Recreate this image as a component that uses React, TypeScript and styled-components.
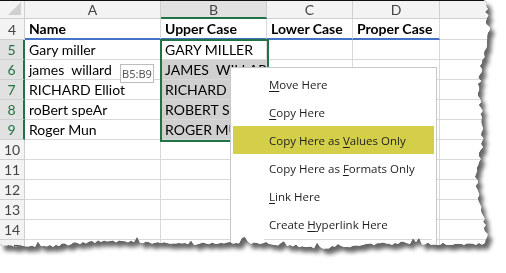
import styled, { createGlobalStyle } from "styled-components";

const GREEN = "#217346";
const GRID = "#d9d9d9";

const GlobalStyle = createGlobalStyle`
  html, body {
    margin: 0;
    padding: 0;
    background: #ffffff;
  }
  body {
    width: 506px;
    height: 273px;
    overflow: hidden;
  }
`;

// deterministic jagged outline for the "torn paper" edge
function rand(seed: number) {
  let s = seed;
  return () => {
    s = (s * 1664525 + 1013904223) % 4294967296;
    return s / 4294967296;
  };
}

function tornPolygon(): string {
  const r = rand(7);
  const pts: string[] = ["0px 0px"];
  for (let y = 0; y <= 244; y += 3) {
    const wave = Math.sin(y / 17) * 3 + Math.sin(y / 41 + 1) * 3;
    const x = 482 + wave + (r() - 0.5) * 4;
    pts.push(`${x.toFixed(1)}px ${y}px`);
  }
  for (let x = 482; x >= 0; x -= 3) {
    const wave = Math.sin(x / 23) * 1.6 + Math.sin(x / 57 + 2) * 1.8;
    const spike = r() > 0.93 ? -4 : 0;
    const y = 244 + wave + spike + (r() - 0.5) * 3;
    pts.push(`${x}px ${y.toFixed(1)}px`);
  }
  pts.push("0px 244px");
  return `polygon(${pts.join(", ")})`;
}

const Paper = styled.div`
  width: 506px;
  height: 273px;
  filter: drop-shadow(0 0 0.7px rgba(0, 0, 0, 0.95))
    drop-shadow(4px 5px 2px rgba(0, 0, 0, 0.6));
`;

const Sheet = styled.div<{ $clip: string }>`
  position: relative;
  width: 500px;
  height: 262px;
  background: #fff;
  clip-path: ${({ $clip }) => $clip};
  border-top: 1px solid #111;
  box-sizing: border-box;
  font-family: Lato, "Liberation Sans", sans-serif;
`;

const Grid = styled.div`
  display: grid;
  grid-template-columns: 25px 136px 106px 86px 87px 60px;
  grid-template-rows: 18px 21px repeat(12, 20px);
`;

const Corner = styled.div`
  position: relative;
  background: #f3f3f3;
  border-right: 1px solid #cfcfcf;
  border-bottom: 1px solid #cfcfcf;
  &::after {
    content: "";
    position: absolute;
    right: 3px;
    bottom: 3px;
    border-left: 13px solid transparent;
    border-bottom: 13px solid #cfcfcf;
  }
`;

const ColHead = styled.div<{ $sel?: boolean }>`
  display: flex;
  align-items: center;
  justify-content: center;
  font-size: 14px;
  color: #444;
  background: ${({ $sel }) => ($sel ? "#e1e1e1" : "#f3f3f3")};
  border-right: 1px solid #cfcfcf;
  border-bottom: ${({ $sel }) => ($sel ? `2px solid ${GREEN}` : "1px solid #cfcfcf")};
  box-sizing: border-box;
`;

const RowHead = styled.div<{ $sel?: boolean }>`
  display: flex;
  align-items: center;
  justify-content: center;
  font-size: 14px;
  color: ${({ $sel }) => ($sel ? GREEN : "#444")};
  background: ${({ $sel }) => ($sel ? "#e1e1e1" : "#f3f3f3")};
  border-right: ${({ $sel }) => ($sel ? `2px solid ${GREEN}` : "1px solid #cfcfcf")};
  border-bottom: 1px solid #cfcfcf;
  box-sizing: border-box;
`;

const Cell = styled.div<{ $head?: boolean; $shade?: boolean }>`
  display: flex;
  align-items: flex-end;
  padding: 0 0 1px 4px;
  font-size: 14px;
  font-weight: ${({ $head }) => ($head ? 700 : 400)};
  color: #000;
  white-space: pre;
  overflow: hidden;
  background: ${({ $shade }) => ($shade ? "#d0d0d0" : "#fff")};
  border-right: 1px solid ${GRID};
  border-bottom: ${({ $head }) => ($head ? "2px solid #4472c4" : `1px solid ${GRID}`)};
  box-sizing: border-box;
`;

const Selection = styled.div`
  position: absolute;
  left: 160px;
  top: 38px;
  width: 109px;
  height: 103px;
  border: 2px solid ${GREEN};
  box-sizing: border-box;
  pointer-events: none;
`;

const Tip = styled.div`
  position: absolute;
  left: 120px;
  top: 63px;
  width: 34px;
  height: 19px;
  display: flex;
  align-items: center;
  justify-content: center;
  background: #fff;
  border: 1px solid #bdbdbd;
  box-sizing: border-box;
  font-family: "Noto Sans", "Liberation Sans", sans-serif;
  font-size: 11px;
  color: #555;
`;

const Menu = styled.div`
  position: absolute;
  left: 230px;
  top: 66px;
  width: 207px;
  height: 200px;
  padding: 2px 2px 0;
  background: #fff;
  border: 1px solid #c8c8c8;
  box-sizing: border-box;
  font-family: "Open Sans", "Noto Sans", sans-serif;
  font-size: 11.5px;
  color: #1e1e1e;
`;

const Item = styled.div<{ $hot?: boolean }>`
  height: 28px;
  display: flex;
  align-items: center;
  padding-left: 36px;
  background: ${({ $hot }) => ($hot ? "#d4cf48" : "transparent")};
  white-space: pre;
`;

const Key = styled.span`
  text-decoration: underline;
  text-underline-offset: 2px;
`;

const Separator = styled.div`
  height: 1px;
  margin: 1px 2px 0 31px;
  background: #d7d7d7;
`;

const cols = ["A", "B", "C", "D", ""];

const rows: { n: number; a: string; b: string; head?: boolean }[] = [
  { n: 4, a: "Name", b: "Upper Case", head: true },
  { n: 5, a: "Gary miller", b: "GARY MILLER" },
  { n: 6, a: "james  willard", b: "JAMES  WILLARD" },
  { n: 7, a: "RICHARD Elliot", b: "RICHARD ELLIOT" },
  { n: 8, a: "roBert speAr", b: "ROBERT SPEAR" },
  { n: 9, a: "Roger Mun", b: "ROGER MUN" },
  { n: 10, a: "", b: "" },
  { n: 11, a: "", b: "" },
  { n: 12, a: "", b: "" },
  { n: 13, a: "", b: "" },
  { n: 14, a: "", b: "" },
  { n: 15, a: "", b: "" },
];

const items: { pre: string; key: string; post: string; hot?: boolean }[] = [
  { pre: "", key: "M", post: "ove Here" },
  { pre: "", key: "C", post: "opy Here" },
  { pre: "Copy Here as ", key: "V", post: "alues Only", hot: true },
  { pre: "Copy Here as ", key: "F", post: "ormats Only" },
  { pre: "", key: "L", post: "ink Here" },
  { pre: "Create ", key: "H", post: "yperlink Here" },
];

export default function App() {
  const clip = tornPolygon();
  return (
    <>
      <GlobalStyle />
      <Paper>
        <Sheet $clip={clip}>
          <Grid>
            <Corner />
            {cols.map((c, i) => (
              <ColHead key={i} $sel={c === "B"}>
                {c}
              </ColHead>
            ))}
            {rows.map((r) => {
              const sel = r.n >= 5 && r.n <= 9;
              return [
                <RowHead key={`h${r.n}`} $sel={sel}>
                  {r.n}
                </RowHead>,
                <Cell key={`a${r.n}`} $head={r.head}>
                  {r.a}
                </Cell>,
                <Cell key={`b${r.n}`} $head={r.head} $shade={r.n >= 6 && r.n <= 9}>
                  {r.b}
                </Cell>,
                <Cell key={`c${r.n}`} $head={r.head}>
                  {r.head ? "Lower Case" : ""}
                </Cell>,
                <Cell key={`d${r.n}`} $head={r.head}>
                  {r.head ? "Proper Case" : ""}
                </Cell>,
                <Cell key={`e${r.n}`} />,
              ];
            })}
          </Grid>
          <Selection />
          <Tip>B5:B9</Tip>
          <Menu>
            {items.map((it) => (
              <Item key={it.pre + it.key} $hot={it.hot}>
                <span>
                  {it.pre}
                  <Key>{it.key}</Key>
                  {it.post}
                </span>
              </Item>
            ))}
            <Separator />
          </Menu>
        </Sheet>
      </Paper>
    </>
  );
}
